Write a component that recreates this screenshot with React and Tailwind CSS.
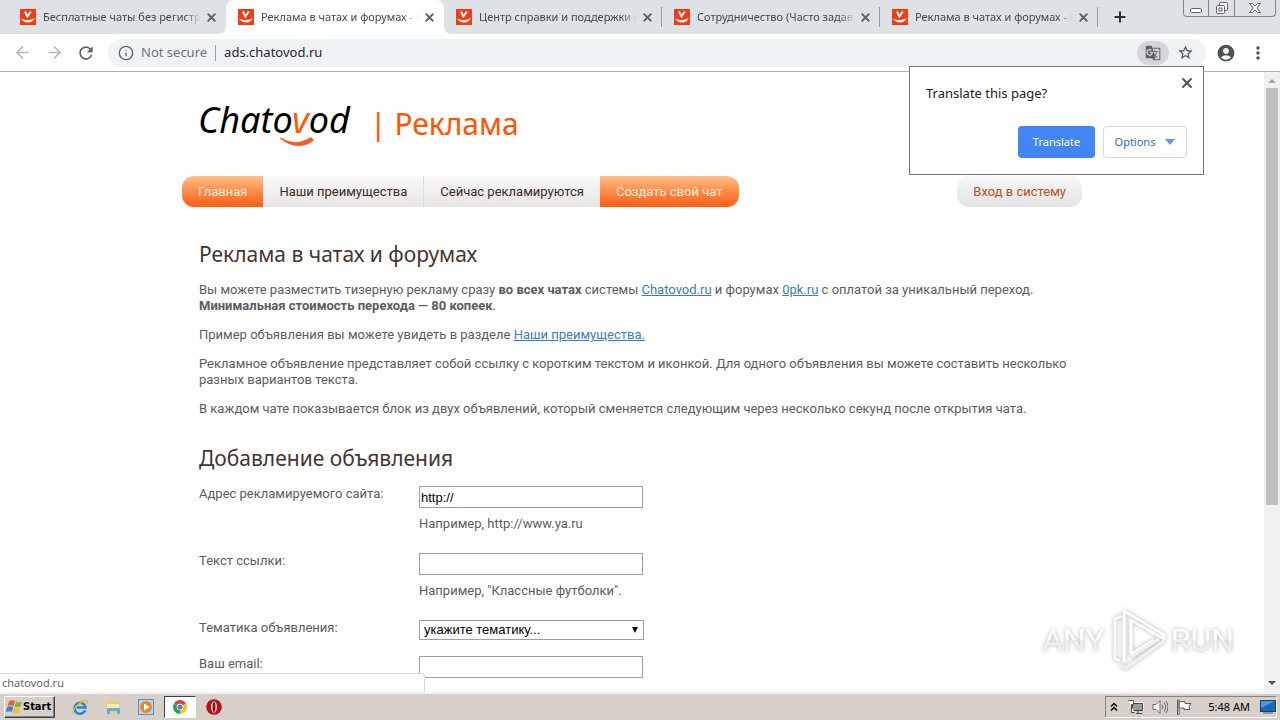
import { ArrowLeft, ArrowRight, Info, Plus, X } from 'lucide-react'
import { MdAccountCircle, MdGTranslate, MdMoreVert, MdRefresh, MdStarBorder } from 'react-icons/md'

const UI = "font-['Noto_Sans','Open_Sans',sans-serif]"
const SITE = "font-['Roboto','Noto_Sans',sans-serif]"

const TABS = [
  { id: 1, title: 'Бесплатные чаты без регистр' },
  { id: 2, title: 'Реклама в чатах и форумах - С', active: true },
  { id: 3, title: 'Центр справки и поддержки с', divider: true },
  { id: 4, title: 'Сотрудничество (Часто задав', divider: true },
  { id: 5, title: 'Реклама в чатах и форумах - С', divider: true },
]

const orange = 'bg-linear-to-b from-[#ffc08a] via-[#ff8a45] to-[#ff5c0c] text-[#fff0e0]'
const gray = 'bg-linear-to-b from-[#f9f8f8] to-[#e8e5e4] text-[#3b2a26]'

const NAV = [
  { label: 'Главная', style: `${orange} rounded-l-xl` },
  { label: 'Наши преимущества', style: gray },
  { label: 'Сейчас рекламируются', style: `${gray} border-l border-[#dedbda]` },
  { label: 'Создать свой чат', style: `${orange} rounded-r-xl` },
]

function Favicon() {
  return (
    <svg viewBox="0 0 16 16" className="size-4 shrink-0">
      <rect width="16" height="16" fill="#f23c14" />
      <path d="M5 2.500L7.400 7.500L10.800 2.500" fill="none" stroke="#fff" strokeWidth="1.900" />
      <path d="M1 9.500Q8 13 15 9Q12.500 13.500 8 13.500Q3.500 13.500 1 9.500z" fill="#fff" />
    </svg>
  )
}

function Tab({ tab }) {
  return (
    <div
      className={`relative flex h-[34px] min-w-0 max-w-[218px] flex-1 items-center pr-2 pl-3 ${
        tab.active ? 'rounded-t-lg bg-white' : ''
      }`}
    >
      {tab.active && (
        <>
          <svg viewBox="0 0 8 8" className="absolute bottom-0 -left-2 size-2">
            <path d="M8 0v8H0q8 0 8-8z" fill="#fff" />
          </svg>
          <svg viewBox="0 0 8 8" className="absolute -right-2 bottom-0 size-2">
            <path d="M0 0v8h8q-8 0-8-8z" fill="#fff" />
          </svg>
        </>
      )}
      <Favicon />
      <span className="ml-[7px] flex-1 overflow-hidden text-[11px] whitespace-nowrap text-[#45484c] mask-r-from-90%">
        {tab.title}
      </span>
      <button aria-label="Close tab" className="ml-1 text-[#5f6368]">
        <X size={13} strokeWidth={3.4} />
      </button>
      {tab.divider && <span className="absolute right-0 h-5 w-px bg-[#9a9da3]" />}
    </div>
  )
}

function WindowButtons() {
  return (
    <div className="ml-auto flex h-[17px] w-[93px] shrink-0 self-start rounded-b border border-t-0 border-[#80848c]">
      <button aria-label="Minimize" className="flex w-[25px] items-center justify-center border-r border-[#80848c]">
        <svg viewBox="0 0 14 14" className="size-3.5">
          <rect x="1.500" y="7.500" width="11" height="4" rx="1" fill="#fff" stroke="#5f6368" />
        </svg>
      </button>
      <button aria-label="Restore" className="flex w-[26px] items-center justify-center border-r border-[#80848c]">
        <svg viewBox="0 0 14 14" className="size-3.5" fill="#fff" stroke="#5f6368">
          <rect x="4.500" y="1.500" width="8" height="8" rx="1" />
          <rect x="1.500" y="4.500" width="8" height="8" rx="1" />
          <rect x="4" y="7" width="3" height="3" />
        </svg>
      </button>
      <button aria-label="Close" className="flex flex-1 items-center justify-center">
        <svg viewBox="0 0 14 14" className="size-3.5">
          <path
            d="M1.500 2.500h3L7 5l2.500-2.500h3L9 7l3.500 4.500h-3L7 9l-2.500 2.500h-3L5 7z"
            fill="#fff"
            stroke="#5f6368"
          />
        </svg>
      </button>
    </div>
  )
}

function Toolbar() {
  return (
    <div className="flex h-[38px] shrink-0 items-center border-b border-[#b1b1b1] bg-white px-3 text-[#5f6368]">
      <button aria-label="Back" className="flex w-5 justify-center text-[#b5b7ba]">
        <ArrowLeft size={19} />
      </button>
      <button aria-label="Forward" className="ml-3 flex w-5 justify-center text-[#b5b7ba]">
        <ArrowRight size={19} />
      </button>
      <button aria-label="Reload" className="ml-3 flex w-5 justify-center">
        <MdRefresh size={20} />
      </button>
      <div className="ml-3 flex h-7 min-w-0 flex-1 items-center rounded-full bg-[#f0f3f6] pr-3 pl-2.5">
        <Info size={16} className="shrink-0" />
        <span className="ml-[7px] text-[13px] whitespace-nowrap text-[#6f7377]">Not secure</span>
        <span className="ml-2 h-4 w-px bg-[#9a9da3]" />
        <input
          aria-label="Address"
          defaultValue="ads.chatovod.ru"
          className="ml-2 min-w-0 flex-1 bg-transparent text-[13px] text-[#26282b] outline-none"
        />
        <button aria-label="Translate this page" className="flex h-6 w-8 items-center justify-center rounded-full bg-[#d3d5d8]">
          <MdGTranslate size={16} />
        </button>
        <button aria-label="Bookmark" className="ml-2 text-[#4d5156]">
          <MdStarBorder size={17} />
        </button>
      </div>
      <button aria-label="Profile" className="ml-2.5 text-[#4d5156]">
        <MdAccountCircle size={20} />
      </button>
      <button aria-label="Menu" className="ml-3 text-[#4d5156]">
        <MdMoreVert size={20} />
      </button>
    </div>
  )
}

function TranslatePopup() {
  return (
    <div className="absolute top-[66px] right-[76px] z-10 h-[109px] w-[295px] border border-[#767676] bg-white px-4 pt-4">
      <button aria-label="Close" className="absolute top-2 right-2 text-[#4d5156]">
        <X size={16} strokeWidth={2.8} />
      </button>
      <p className="text-[13px] leading-5 text-[#202124]">Translate this page?</p>
      <div className="mt-[23px] flex justify-end gap-2 text-[11px]">
        <button className="h-8 w-[77px] rounded bg-[#4285f4] text-white">Translate</button>
        <button className="flex h-8 w-[84px] items-center justify-center gap-2.5 rounded border border-[#d5d8dc] text-[#2a6fc9]">
          Options
          <svg viewBox="0 0 10 6" className="h-1.5 w-2.5">
            <path d="M0 0h10L5 6z" fill="#5a9be6" />
          </svg>
        </button>
      </div>
    </div>
  )
}

function Logo() {
  return (
    <div className={`flex items-center pl-4 ${UI}`}>
      <a href="#" className="relative -mt-2 text-[36px] leading-10 text-black italic">
        Chato<span className="text-[#ff5a0a]">v</span>od
        <svg viewBox="0 0 34 10" className="absolute top-[37px] left-[82px] h-2.5 w-[34px]">
          <path d="M0 1.500Q17 15.500 34 3.500L31 0Q16 10 1 .5z" fill="#ff5a1e" />
        </svg>
      </a>
      <span className="ml-5 text-[30px] leading-10 text-[#ff5400]">|</span>
      <span className="ml-2 text-[30px] leading-10 text-[#ff5400]">Реклама</span>
    </div>
  )
}

function Field({ id, label, hint, children }) {
  return (
    <div className="flex items-start">
      <label htmlFor={id} className="w-[220px] shrink-0">{label}</label>
      <div>
        {children}
        {hint && <p className="mt-2">{hint}</p>}
      </div>
    </div>
  )
}

const link = 'text-[#3b7dbd] underline'
const heading = "text-[21px] leading-8 text-[#453430] font-['Noto_Sans','Open_Sans',sans-serif]"
const box = "block h-[22px] w-56 border border-[#a0a0a0] bg-white px-px text-[13px] text-black outline-none font-['Liberation_Sans',sans-serif]"

function Page() {
  return (
    <main className={`min-w-0 flex-1 overflow-hidden bg-white text-[13px] leading-4 text-[#5c5c5c] ${SITE}`}>
      <div className="mx-auto max-w-[900px] pt-8">
        <Logo />
        <nav className="mt-8 flex h-[31px]">
          {NAV.map(item => (
            <a key={item.label} href="#" className={`flex items-center px-4 whitespace-nowrap ${item.style}`}>
              {item.label}
            </a>
          ))}
          <a
            href="#"
            className="ml-auto flex items-center rounded-xl bg-linear-to-b from-[#f9f8f8] to-[#e4e3e3] px-4 whitespace-nowrap text-[#c0501c]"
          >
            Вход в систему
          </a>
        </nav>

        <div className="pt-[31px] pl-[17px]">
          <h1 className={heading}>Реклама в чатах и форумах</h1>
          <div className="mt-3 space-y-[13px]">
            <p>
              Вы можете разместить тизерную рекламу сразу <b>во всех чатах</b> системы{' '}
              <a href="#" className={link}>Chatovod.ru</a> и форумах <a href="#" className={link}>0pk.ru</a> с оплатой
              за уникальный переход.
              <br />
              <b>Минимальная стоимость перехода — 80 копеек</b>.
            </p>
            <p>
              Пример объявления вы можете увидеть в разделе <a href="#" className={link}>Наши преимущества.</a>
            </p>
            <p>
              Рекламное объявление представляет собой ссылку с коротким текстом и иконкой. Для одного объявления вы
              можете составить несколько
              <br />
              разных вариантов текста.
            </p>
            <p>
              В каждом чате показывается блок из двух объявлений, который сменяется следующим через несколько секунд
              после открытия чата.
            </p>
          </div>

          <h2 className={`mt-[25px] ${heading}`}>Добавление объявления</h2>
          <form className="mt-3">
            <Field id="url" label="Адрес рекламируемого сайта:" hint="Например, http://www.ya.ru">
              <input id="url" defaultValue="http://" className={box} />
            </Field>
            <div className="mt-[21px]">
              <Field id="text" label="Текст ссылки:" hint={'Например, "Классные футболки".'}>
                <input id="text" className={box} />
              </Field>
            </div>
            <div className="mt-[21px]">
              <Field id="topic" label="Тематика объявления:">
                <div className="relative">
                  <select
                    id="topic"
                    className="block h-5 w-[225px] appearance-none border border-[#a0a0a0] bg-white px-1 text-[13px] leading-4 text-black font-['Liberation_Sans',sans-serif]"
                  >
                    <option>укажите тематику...</option>
                  </select>
                  <svg viewBox="0 0 6 6" className="pointer-events-none absolute top-[7px] right-1.5 size-1.5">
                    <path d="M0 0h6L3 6z" />
                  </svg>
                </div>
              </Field>
            </div>
            <div className="mt-4">
              <Field id="email" label="Ваш email:">
                <input id="email" className={box} />
              </Field>
            </div>
          </form>
        </div>
      </div>
    </main>
  )
}

function Scrollbar() {
  return (
    <div className="flex w-4 shrink-0 flex-col items-center bg-[#f1f1f1]">
      <svg viewBox="0 0 16 16" className="size-4">
        <path d="M4 11h8L8 7z" fill="#a3a3a3" />
      </svg>
      <div className="flex w-full flex-1 flex-col items-center">
        <div className="h-[71%] w-3 bg-[#c1c1c1]" />
      </div>
      <svg viewBox="0 0 16 16" className="size-4">
        <path d="M4 5h8L8 9z" fill="#505050" />
      </svg>
    </div>
  )
}

function Watermark() {
  const word =
    "bg-linear-to-b from-white from-50% to-[#f0f0f0] to-50% bg-clip-text text-[32px] leading-[60px] text-transparent font-['Roboto',sans-serif]"
  return (
    <div className="pointer-events-none absolute right-[46px] bottom-12 flex items-center gap-1 drop-shadow-[0_0_2px_rgba(0,0,0,0.3)]">
      <span className={word}>ANY</span>
      <svg viewBox="0 0 58 64" className="h-16 w-[58px]" fill="none" strokeWidth="3" strokeLinejoin="round">
        <path d="M13 8L6 11V51L11 53" stroke="#f8f8f8" />
        <path d="M15 54V3L55 27V31L22 12V46L45 32" stroke="#fff" />
        <path d="M55 33L17 60L12 58M50 31L22 49" stroke="#f0f0f0" />
      </svg>
      <span className={word}>RUN</span>
    </div>
  )
}

function StartFlag() {
  return (
    <svg viewBox="0 0 18 16" className="h-4 w-[18px]">
      <path d="M4 2.500Q7 .5 10 2L8.500 7Q5.500 5.500 2.500 7z" fill="#e5602a" />
      <path d="M11 2.500Q14 4 17 2.500L15.500 7.500Q12.500 9 9.500 7.500z" fill="#79b739" />
      <path d="M2.200 8Q5 6.500 8.200 8L7 13Q4 11.500.8 13z" fill="#3d83cf" />
      <path d="M9.200 8.500Q12 10 15.200 8.500L14 13.500Q11 15 7.800 13.500z" fill="#f5c02c" />
    </svg>
  )
}

function Taskbar() {
  return (
    <footer className="flex h-7 shrink-0 items-center border-t-2 border-[#f4f2ee] bg-[#d6d0c8] pr-[3px] pl-1">
      <button className="flex h-[22px] w-[51px] items-center border border-t-white border-r-[#404040] border-b-[#404040] border-l-white text-[11px] font-bold text-black shadow-[inset_-1px_-1px_0_#86827c] font-['DejaVu_Sans_Condensed','DejaVu_Sans',sans-serif]">
        <StartFlag />
        Start
      </button>
      <button aria-label="Internet Explorer" className="ml-[17px]">
        <svg viewBox="0 0 16 16" className="size-4" fill="none">
          <path d="M13.200 11.200A5.500 5.500 0 1 1 13.500 8.500H4.500" stroke="#2b86d6" strokeWidth="2.600" />
          <path d="M1.500 14.500C-.5 11 9 1 14.500 1.500 16 2 15 4 14.500 5" stroke="#e8bd35" strokeWidth="1.300" />
        </svg>
      </button>
      <button aria-label="Explorer" className="ml-[17px]">
        <svg viewBox="0 0 16 16" className="size-4">
          <path d="M1 1h5l1 1.500h7V14H1z" fill="#e9cf72" />
          <path d="M2 5h12v6H2z" fill="#f8eca9" />
          <path d="M2 9h13v6h-3v-3H5v3H2z" fill="#63acdf" />
        </svg>
      </button>
      <button aria-label="Media Player" className="ml-[17px]">
        <svg viewBox="0 0 16 16" className="size-4">
          <rect x=".5" y=".5" width="15" height="15" fill="#b7d6ef" stroke="#4f91ca" />
          <circle cx="8" cy="8" r="6" fill="#f0831c" />
          <path d="M6 4.500L12 8l-6 3.500z" fill="#fff" />
        </svg>
      </button>
      <button
        aria-label="Chrome"
        className="ml-2.5 flex h-[22px] w-8 items-center justify-center border border-t-[#404040] border-r-white border-b-white border-l-[#404040] bg-white"
      >
        <svg viewBox="0 0 16 16" className="size-3.5">
          <path d="M8 8L1.100 4A8 8 0 0 1 14.900 4z" fill="#e34133" />
          <path d="M8 8L14.900 4A8 8 0 0 1 8 16z" fill="#fbc116" />
          <path d="M8 8V16A8 8 0 0 1 1.100 4z" fill="#2da24c" />
          <circle cx="8" cy="8" r="3.800" fill="#fff" />
          <circle cx="8" cy="8" r="3" fill="#4385f5" />
        </svg>
      </button>
      <button aria-label="Opera" className="ml-2.5">
        <svg viewBox="0 0 16 16" className="size-4">
          <circle cx="8" cy="8" r="7.800" fill="#b3141b" />
          <ellipse cx="8" cy="8" rx="3" ry="5.800" fill="#e6dedb" />
          <ellipse cx="8" cy="8" rx="1.400" ry="5" fill="#8b0d13" />
        </svg>
      </button>

      <div className="ml-auto flex h-[22px] items-center border border-t-[#86827c] border-r-white border-b-white border-l-[#86827c] pl-1 text-[11px] text-black">
        <svg viewBox="0 0 8 10" className="h-2.5 w-2" fill="none" stroke="#000" strokeWidth="1.400">
          <path d="M1 4.500L4 1.500l3 3M1 8.500l3-3 3 3" />
        </svg>
        <svg viewBox="0 0 16 16" className="ml-2.5 size-4" stroke="#4a4a4a">
          <rect x="5.500" y="3.500" width="10" height="8" fill="#a4a4a4" stroke="#fff" />
          <rect x="4.500" y="4.500" width="10" height="7" fill="#9c9c9c" />
          <path d="M8 14.500h6M10 12v2" />
          <path d="M.5 1.500h5v4h-2v8h3" fill="#fff" />
        </svg>
        <svg viewBox="0 0 16 16" className="ml-2 size-4" fill="none" stroke="#6b6b6b">
          <path d="M1 5.500h3L8 1.500v13l-4-4H1z" fill="#fff" />
          <path d="M10 5.500q2 2.500 0 5M12 3.500q3.500 4.500 0 9M14 2q4 6 0 12" />
        </svg>
        <svg viewBox="0 0 16 16" className="ml-2 size-4" stroke="#5d5d5d">
          <path d="M1.500 1v14.500h1.500V1zM3 2.500h6v2h6l-2 3 1 3H8v-1.500H3z" fill="#fff" />
        </svg>
        <span className="ml-4">5:48 AM</span>
        <svg viewBox="0 0 16 14" className="ml-2.5 h-3.5 w-4">
          <rect x=".5" y=".5" width="15" height="11" fill="#1f64b8" stroke="#123f78" />
          <path d="M1 1h14L1 8z" fill="#5496dd" />
          <path d="M3 13h10" stroke="#5d5d5d" />
        </svg>
      </div>
    </footer>
  )
}

export default function App() {
  return (
    <div className={`relative flex h-screen flex-col overflow-hidden bg-white ${UI}`}>
      <header className="flex h-[34px] shrink-0 items-center bg-[#dee1e6] pr-1 pl-2">
        {TABS.map(tab => (
          <Tab key={tab.id} tab={tab} />
        ))}
        <button aria-label="New tab" className="ml-3.5 text-[#2f3235]">
          <Plus size={16} strokeWidth={3} />
        </button>
        <WindowButtons />
      </header>
      <Toolbar />
      <TranslatePopup />

      <div className="relative flex min-h-0 flex-1">
        <Page />
        <Scrollbar />
        <div className="absolute bottom-0 left-0 h-[19px] w-[425px] rounded-tr border-t border-r border-[#d8d8d8] bg-white pl-0.5 text-[11px] leading-[18px] text-[#666]">
          chatovod.ru
        </div>
      </div>
      <Watermark />
      <Taskbar />
    </div>
  )
}
